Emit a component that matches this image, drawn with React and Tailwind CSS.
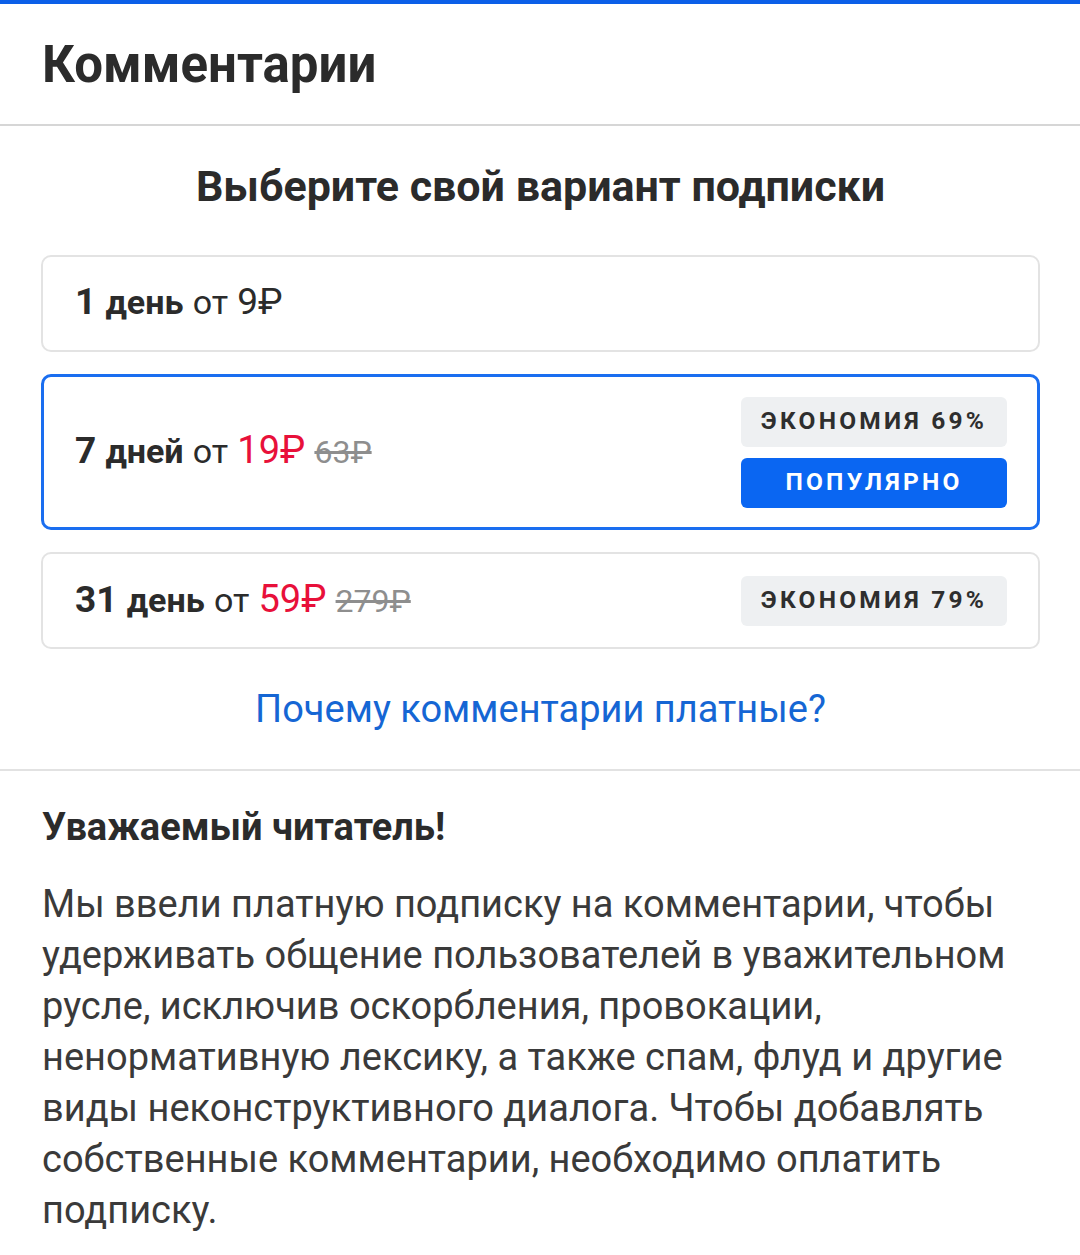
import React from 'react';

const plans = [
  { days: '1', unit: 'день', price: '9₽', old: null, save: null, popular: false },
  { days: '7', unit: 'дней', price: '19₽', old: '63₽', save: '69%', popular: true },
  { days: '31', unit: 'день', price: '59₽', old: '279₽', save: '79%', popular: false },
];

const PlanCard = ({ plan }) => {
  const highlighted = plan.price !== '9₽';
  return (
    <div
      className={`flex items-center justify-between rounded-[10px] ${
        plan.popular ? 'border-[3px] border-[#1a6ef0] h-[156px] pl-[31px] pr-[30px]' : 'border-2 border-[#e3e3e3] h-[97px] pl-[32px] pr-[31px]'
      }`}
    >
      <div className="text-[37px] text-[#2b2b2b] leading-none pb-[4px]">
        <span className="font-bold">{plan.days}</span>{' '}
        <span className="font-bold text-[34px]">{plan.unit}</span>{' '}
        <span className="text-[34px]">от</span>{' '}
        <span className={highlighted ? 'text-[#e8103a] text-[38px]' : ''}>{plan.price}</span>
        {plan.old && (
          <>
            {' '}
            <span className="text-[32px] text-[#8e8e8e] line-through">{plan.old}</span>
          </>
        )}
      </div>
      {plan.save && (
        <div className="flex flex-col gap-[11px]">
          <div className="w-[266px] h-[50px] rounded-[6px] bg-[#eef0f2] flex items-center justify-center text-[24.5px] font-bold tracking-[3.2px] text-[#2e2e2e]">
            ЭКОНОМИЯ {plan.save}
          </div>
          {plan.popular && (
            <div className="w-[266px] h-[50px] rounded-[6px] bg-[#0a66f2] flex items-center justify-center text-[24.5px] font-bold tracking-[3.2px] text-white">
              ПОПУЛЯРНО
            </div>
          )}
        </div>
      )}
    </div>
  );
};

export default function App() {
  return (
    <div className="w-[1080px] min-h-[1255px] bg-white" style={{ fontFamily: 'Roboto, "Noto Sans", sans-serif' }}>
      <div className="h-[4px] bg-[#0b5fe8]" />
      <div className="h-[122px] flex items-center px-[42px] border-b-2 border-[#d6d6d6]">
        <h1 className="text-[51px] font-bold text-[#2b2b2b] leading-none">Комментарии</h1>
      </div>

      <div className="pl-[41px] pr-[40px] pt-[39px] pb-[40px] border-b-2 border-[#e2e2e2]">
        <h2 className="text-center text-[43px] font-bold text-[#2b2b2b] leading-none mb-[47px]">
          Выберите свой вариант подписки
        </h2>
        <div className="flex flex-col gap-[22px]">
          {plans.map((p) => (
            <PlanCard key={p.days} plan={p} />
          ))}
        </div>
        <div className="text-center mt-[41px]">
          <a href="#" className="text-[38px] text-[#1566d4] leading-none">Почему комментарии платные?</a>
        </div>
      </div>

      <div className="px-[42px] pt-[37px]">
        <h3 className="text-[38px] font-bold text-[#2b2b2b] leading-none mb-[33px]">Уважаемый читатель!</h3>
        <p className="text-[38px] leading-[51px] text-[#3a3a3a]">
          Мы ввели платную подписку на комментарии, чтобы удерживать общение пользователей в уважительном
          русле, исключив оскорбления, провокации, ненормативную лексику, а также спам, флуд и другие
          виды неконструктивного диалога. Чтобы добавлять собственные комментарии, необходимо оплатить
          подписку.
        </p>
      </div>
    </div>
  );
}
